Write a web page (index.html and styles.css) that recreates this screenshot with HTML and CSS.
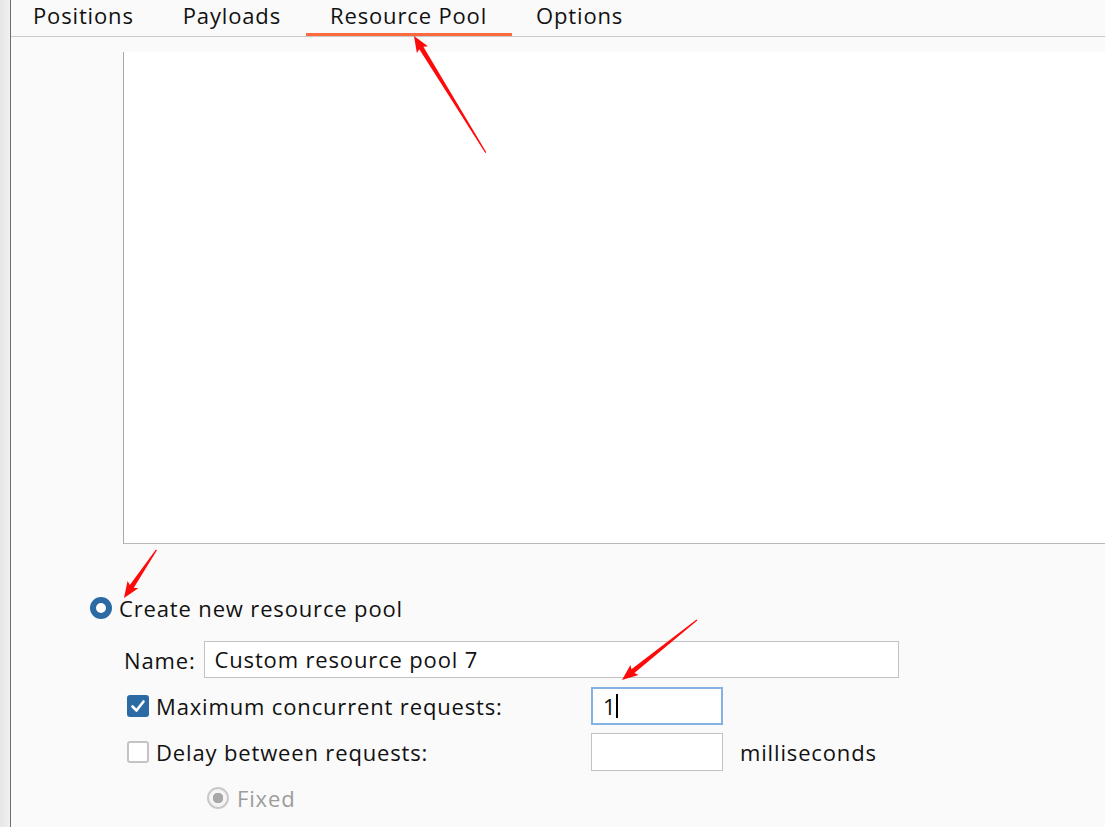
FILE: index.html
```html
<!DOCTYPE html>
<html>
<head>
<meta charset="utf-8">
<link rel="stylesheet" href="styles.css">
</head>
<body>
<div class="app">
  <div class="side-strip"></div>
  <div class="main">
    <div class="tabs">
      <div class="tab tab-first">Positions</div>
      <div class="tab">Payloads</div>
      <div class="tab active">Resource Pool</div>
      <div class="tab">Options</div>
    </div>
    <div class="content">
      <div class="listbox"></div>
      <div class="pool">
        <div class="radio-row">
          <span class="radio on"></span>
          <span class="label">Create new resource pool</span>
        </div>
        <div class="name-row">
          <span class="label">Name:</span>
          <div class="field name-field">Custom resource pool 7</div>
        </div>
        <div class="opt-grid">
          <div class="check-cell">
            <span class="checkbox checked">
              <svg viewBox="0 0 22 22" width="22" height="22"><path d="M5.5 11.5 L9.5 15.5 L16.5 6.5" fill="none" stroke="#fff" stroke-width="2.6" stroke-linecap="round" stroke-linejoin="round"/></svg>
            </span>
            <span class="label">Maximum concurrent requests:</span>
          </div>
          <div class="field small focus"><span class="val">1</span><span class="caret"></span></div>
          <div></div>
          <div class="check-cell">
            <span class="checkbox"></span>
            <span class="label">Delay between requests:</span>
          </div>
          <div class="field small"></div>
          <div class="unit">milliseconds</div>
        </div>
        <div class="fixed-row">
          <span class="radio disabled"></span>
          <span class="label dim">Fixed</span>
        </div>
      </div>
    </div>
  </div>
</div>
<svg class="annot" width="1105" height="827" viewBox="0 0 1105 827">
  <g fill="#ff0a0a">
    <g transform="translate(414 36) rotate(-121.6)">
      <polygon points="0,0 -16,-6.5 -14,-2.4 -137,-0.6 -137,0.6 -14,2.4 -16,6.5"/>
    </g>
    <g transform="translate(124 598) rotate(124)">
      <polygon points="0,0 -16,-6.5 -14,-2.4 -58,-0.6 -58,0.6 -14,2.4 -16,6.5"/>
    </g>
    <g transform="translate(622 680) rotate(141.3)">
      <polygon points="0,0 -16,-6.5 -14,-2.4 -96,-0.6 -96,0.6 -14,2.4 -16,6.5"/>
    </g>
  </g>
</svg>
</body>
</html>
```

FILE: styles.css
```css
html, body {
  margin: 0;
  padding: 0;
}
body {
  width: 1105px;
  height: 827px;
  overflow: hidden;
  background: #fafafa;
  font-family: "Open Sans", "Noto Sans", sans-serif;
  font-size: 22px;
  letter-spacing: 0.85px;
  color: #111;
  position: relative;
}
.app {
  display: flex;
  height: 827px;
}
.side-strip {
  width: 10px;
  flex: none;
  background: linear-gradient(to right, #e6e6e6, #f1f1f1);
  border-right: 1px solid #6e6e6e;
}
.main {
  flex: 1;
  display: flex;
  flex-direction: column;
  min-width: 0;
}
.tabs {
  height: 36px;
  border-bottom: 1px solid #cacaca;
  display: flex;
  align-items: stretch;
  padding-left: 0;
}
.tab {
  padding: 0 24.5px;
  line-height: 31px;
  box-sizing: border-box;
  border-bottom: 3px solid transparent;
  white-space: nowrap;
  color: #111;
}
.tab-first {
  padding-left: 22px;
}
.tab.active {
  border-bottom-color: #ff6a3d;
}
.content {
  flex: 1;
  display: flex;
  flex-direction: column;
}
.listbox {
  margin: 15px 0 0 112px;
  height: 491px;
  background: #fff;
  border-left: 1px solid #a9a9a9;
  border-bottom: 1px solid #b9b9b9;
}
.pool {
  display: flex;
  flex-direction: column;
}
.radio-row {
  margin-top: 52px;
  margin-left: 79px;
  display: flex;
  align-items: center;
  height: 24px;
  gap: 7px;
}
.radio {
  width: 22px;
  height: 22px;
  border-radius: 50%;
  box-sizing: border-box;
  flex: none;
}
.radio.on {
  background: #fff;
  border: 6px solid #2b6aa3;
}
.radio.disabled {
  border: 2px solid #c9c9c9;
  background: radial-gradient(circle, #a8a8a8 0 5px, #f4f4f4 5.5px);
}
.label {
  white-space: nowrap;
  line-height: 24px;
}
.dim {
  color: #9c9c9c;
}
.name-row {
  margin-top: 21px;
  margin-left: 113px;
  display: flex;
  align-items: center;
  gap: 8px;
  height: 37px;
}
.field {
  box-sizing: border-box;
  background: #fff;
  border: 1px solid #c3c3c3;
  height: 37px;
  line-height: 35px;
  padding: 0 10px;
  white-space: nowrap;
}
.name-field {
  width: 695px;
}
.opt-grid {
  margin-top: 9px;
  margin-left: 116px;
  display: grid;
  grid-template-columns: 464px 132px auto;
  grid-auto-rows: 38px;
  row-gap: 8px;
  align-items: center;
}
.check-cell {
  display: flex;
  align-items: center;
  gap: 7px;
}
.checkbox {
  width: 22px;
  height: 22px;
  box-sizing: border-box;
  border: 2px solid #c4c4c4;
  border-radius: 3px;
  background: #fff;
  flex: none;
  display: flex;
}
.checkbox.checked {
  background: #2b6aa3;
  border-color: #2b6aa3;
}
.checkbox svg {
  margin: -2px;
}
.field.small {
  width: 132px;
  height: 38px;
  line-height: 36px;
  display: flex;
  align-items: center;
}
.field.focus {
  border: 2px solid #84b2e3;
  padding-left: 10px;
}
.caret {
  display: inline-block;
  width: 2px;
  height: 24px;
  background: #000;
  margin-left: 0;
}
.unit {
  padding-left: 17px;
  line-height: 24px;
}
.fixed-row {
  margin-top: 15px;
  margin-left: 196px;
  display: flex;
  align-items: center;
  gap: 8px;
  height: 24px;
}
.annot {
  position: absolute;
  left: 0;
  top: 0;
  pointer-events: none;
}
```
